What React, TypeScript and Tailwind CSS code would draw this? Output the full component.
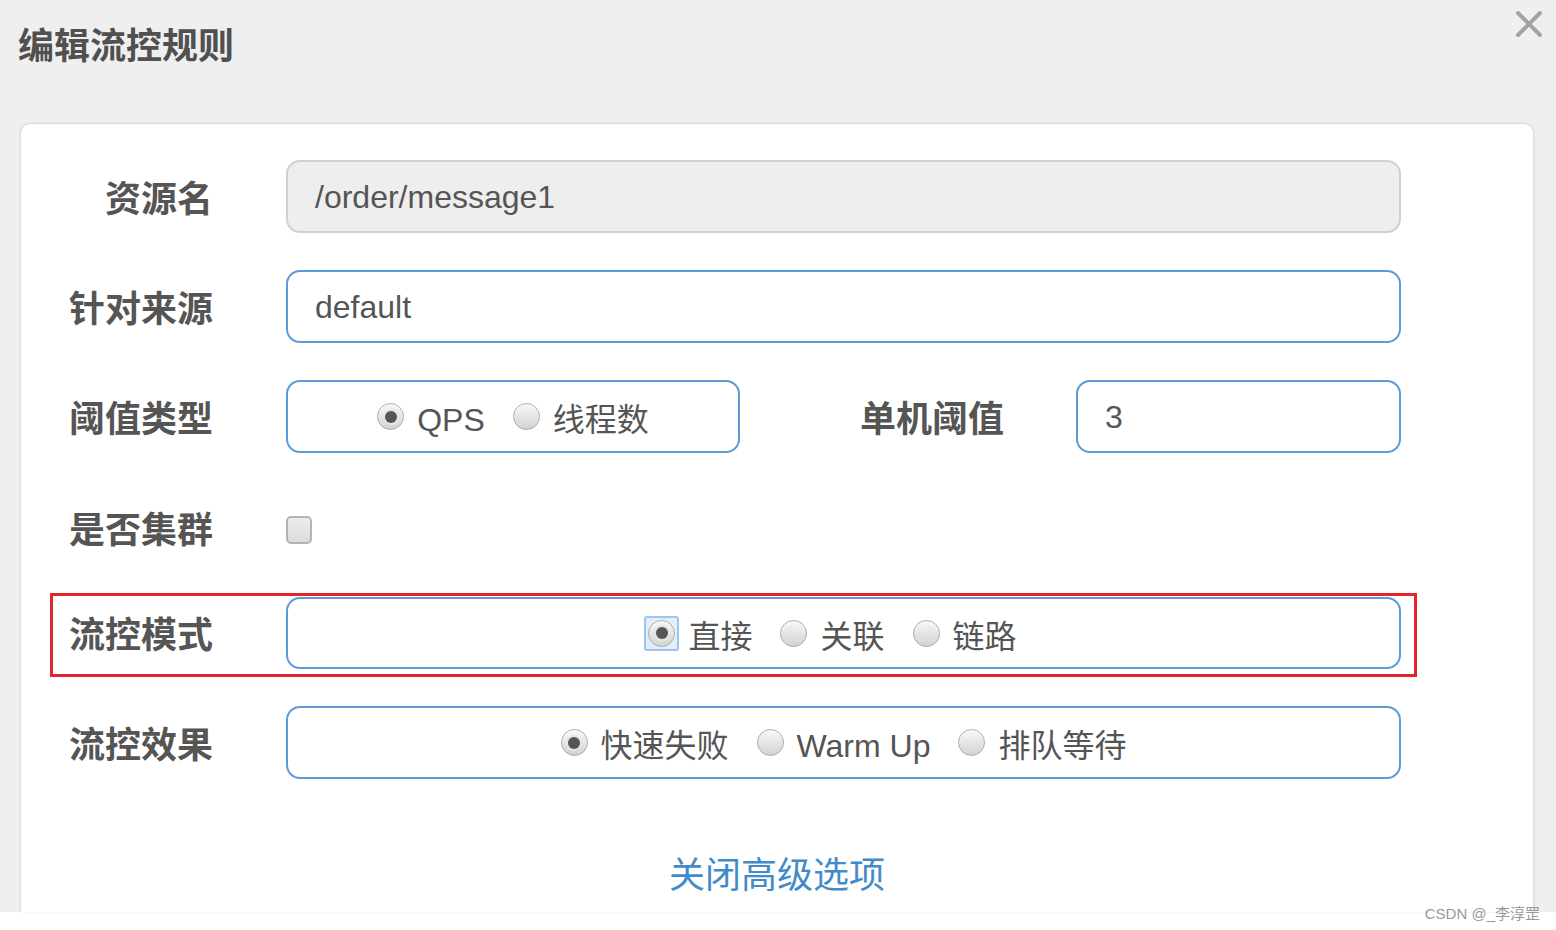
import * as React from "react";
import { clsx } from "clsx";

const FONT = "font-['Liberation_Sans','Noto_Sans_CJK_SC',sans-serif]";

function Radio({ checked, focused }: { checked?: boolean; focused?: boolean }) {
  return (
    <span className="relative flex h-[27px] w-[27px] shrink-0 items-center justify-center">
      {focused && (
        <span className="absolute -inset-[4px] rounded-[3px] border-2 border-[#9cc5f0] bg-[#e2eefb]" />
      )}
      <span className="relative flex h-[27px] w-[27px] items-center justify-center rounded-full border border-[#a9a9a9] bg-linear-to-b from-[#f8f8f8] to-[#d3d3d3] shadow-[inset_0_1px_1px_rgba(255,255,255,0.9)]">
        {checked && (
          <span className="h-[12px] w-[12px] rounded-full bg-[#555] ring-2 ring-[#e6e6e6]" />
        )}
      </span>
    </span>
  );
}

type Option = { label: string; checked?: boolean; focused?: boolean };

function RadioGroup({ options, className }: { options: Option[]; className?: string }) {
  return (
    <div
      className={clsx(
        "flex h-full items-center justify-center gap-[28px] rounded-[14px] border-2 border-[#5b9bd9] bg-white",
        className,
      )}
    >
      {options.map((o) => (
        <label key={o.label} className="flex items-center gap-[13px]">
          <Radio checked={o.checked} focused={o.focused} />
          <span className="pt-[7px] text-[32px] leading-none text-[#555]">{o.label}</span>
        </label>
      ))}
    </div>
  );
}

function Label({ children, className }: { children: React.ReactNode; className?: string }) {
  return (
    <div
      className={clsx(
        "shrink-0 pt-[6px] text-right text-[36px] font-bold leading-none text-[#555]",
        className,
      )}
    >
      {children}
    </div>
  );
}

function TextInput({ value, disabled, className }: { value: string; disabled?: boolean; className?: string }) {
  return (
    <div
      className={clsx(
        "flex h-full items-center rounded-[14px] border-2 pl-[27px] text-[32px] leading-none text-[#555]",
        disabled ? "border-[#d0d0d0] bg-[#eeeeee]" : "border-[#5b9bd9] bg-white",
        className,
      )}
    >
      {value}
    </div>
  );
}

export default function App() {
  return (
    <div className={clsx("relative h-[930px] w-[1556px] overflow-hidden bg-white", FONT)}>
      <div className="flex h-[912px] flex-col bg-[#efefef]">
        {/* header */}
        <div className="h-[123px] shrink-0 pl-[18px] pt-[29px]">
          <h2 className="text-[36px] font-bold leading-none text-[#505050]">编辑流控规则</h2>
        </div>
        <button className="absolute right-[13px] top-[10px]" aria-label="关闭">
          <svg width="28" height="28" viewBox="0 0 28 28">
            <path d="M3 3 L25 25 M25 3 L3 25" stroke="#a3a3a3" strokeWidth="4" strokeLinecap="round" />
          </svg>
        </button>

        {/* form card */}
        <div className="ml-[20px] mr-[22px] flex flex-1 flex-col rounded-t-[10px] border border-b-0 border-[#dcdcdc] bg-white pt-[36px] shadow-[0_0_3px_rgba(0,0,0,0.08)]">
          <div className="flex flex-col gap-[37px]">
            <div className="flex h-[73px] items-center">
              <Label className="w-[192px]">资源名</Label>
              <TextInput value="/order/message1" disabled className="ml-[73px] w-[1115px]" />
            </div>

            <div className="flex h-[73px] items-center">
              <Label className="w-[192px]">针对来源</Label>
              <TextInput value="default" className="ml-[73px] w-[1115px]" />
            </div>

            <div className="flex h-[73px] items-center">
              <Label className="w-[192px]">阈值类型</Label>
              <RadioGroup
                className="ml-[73px] w-[454px]"
                options={[{ label: "QPS", checked: true }, { label: "线程数" }]}
              />
              <Label className="w-[264px]">单机阈值</Label>
              <TextInput value="3" className="ml-[72px] w-[325px]" />
            </div>

            <div className="flex h-[70px] items-center">
              <Label className="w-[192px] pt-[12px]">是否集群</Label>
              <span className="ml-[73px] mt-[10px] h-[28px] w-[26px] rounded-[5px] border-2 border-[#b4b4b4] bg-linear-to-b from-[#ececec] to-[#dcdcdc]" />
            </div>

            <div className="relative flex h-[72px] items-center">
              <span className="absolute left-[29px] top-[-4px] h-[84px] w-[1367px] border-[3px] border-[#e3242b]" />
              <Label className="relative w-[192px]">流控模式</Label>
              <RadioGroup
                className="relative ml-[73px] w-[1115px] pr-[22px]"
                options={[
                  { label: "直接", checked: true, focused: true },
                  { label: "关联" },
                  { label: "链路" },
                ]}
              />
            </div>

            <div className="flex h-[73px] items-center">
              <Label className="w-[192px]">流控效果</Label>
              <RadioGroup
                className="ml-[73px] w-[1115px]"
                options={[
                  { label: "快速失败", checked: true },
                  { label: "Warm Up" },
                  { label: "排队等待" },
                ]}
              />
            </div>
          </div>

          <div className="mt-[79px] text-center">
            <a className="text-[36px] leading-none text-[#428bca]">关闭高级选项</a>
          </div>
        </div>
      </div>

      <div className="absolute bottom-[9px] right-[16px] text-[15px] leading-none text-[#999]">
        CSDN @_李淳罡
      </div>
    </div>
  );
}
